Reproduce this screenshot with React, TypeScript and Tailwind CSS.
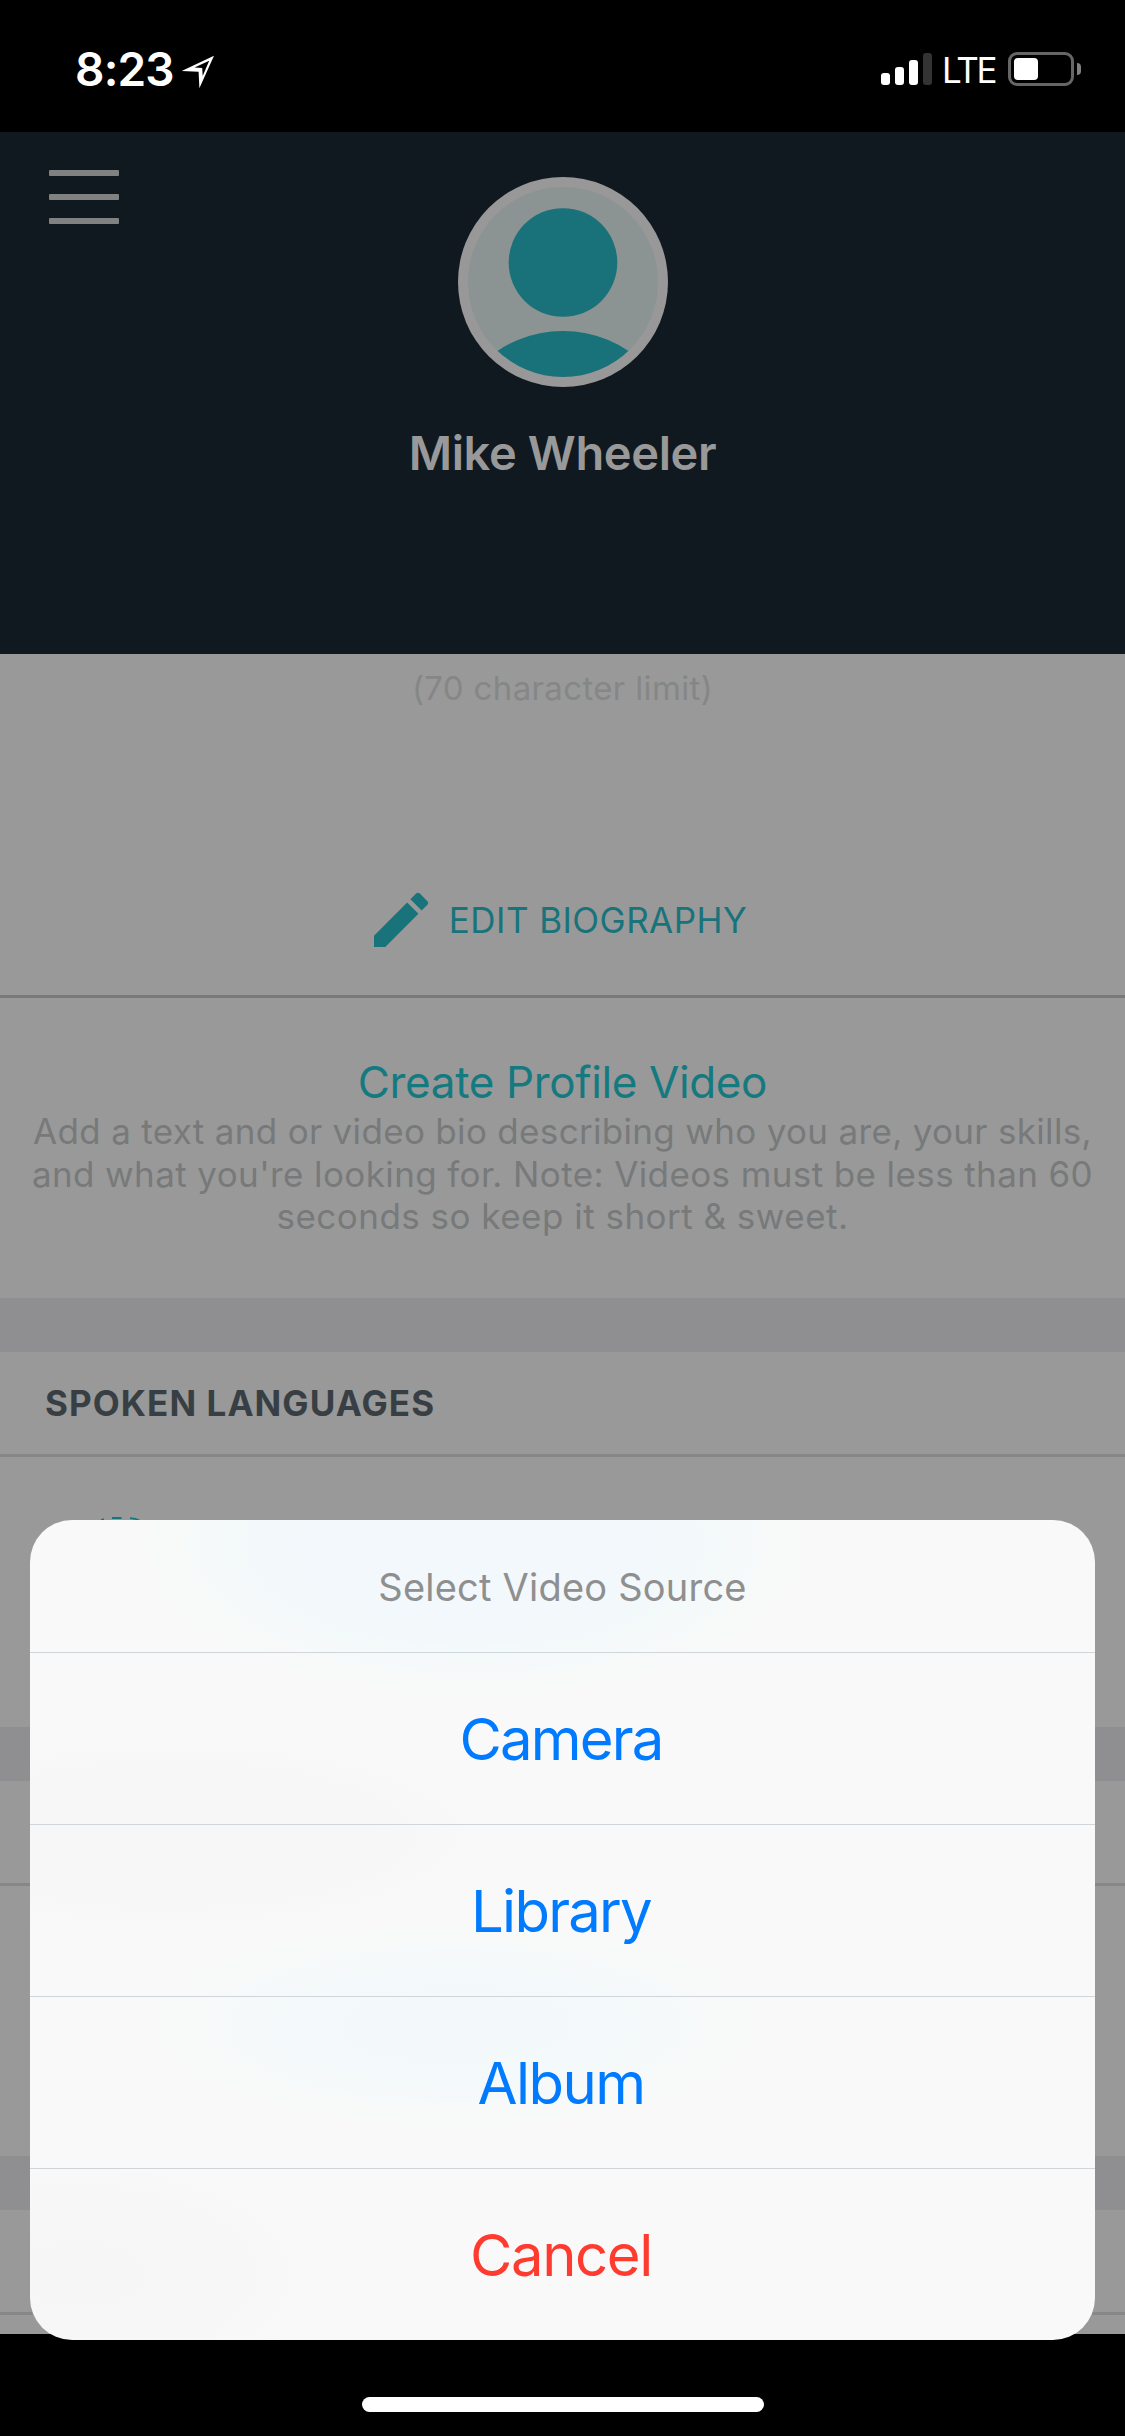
import type { ReactNode } from "react";

function LocationArrow() {
  return (
    <svg className="mt-[6px] ml-[7px] h-[34px] w-[34px]" viewBox="0 0 34 34" fill="none">
      <path
        d="M0.7 16 L33 0.8 L18.4 33.2 L17.6 16.8 Z M13.5 12.6 L21.2 12.9 L21.7 21 L28.2 5.8 Z"
        fill="#fff"
        fillRule="evenodd"
      />
    </svg>
  );
}

function SignalBars() {
  return (
    <div className="flex h-8 items-end gap-[5px]">
      <span className="h-3 w-[9px] rounded-[3px] bg-white" />
      <span className="h-[18px] w-[9px] rounded-[3px] bg-white" />
      <span className="h-[25px] w-[9px] rounded-[3px] bg-white" />
      <span className="h-8 w-[9px] rounded-[3px] bg-[#333333]" />
    </div>
  );
}

function Battery() {
  return (
    <div className="flex items-center gap-[3px]">
      <div className="h-[34px] w-[66px] rounded-[9px] border-[3px] border-[#666666] p-[3px]">
        <div className="h-full w-6 rounded-[4px] bg-white" />
      </div>
      <span className="h-3 w-1 rounded-r-full bg-[#808080]" />
    </div>
  );
}

function StatusBar() {
  return (
    <div className="flex h-[132px] items-center justify-between bg-black pt-[6px] pr-[44px] pl-[75px] text-white">
      <div className="flex items-center">
        <span className="text-[46px] leading-none font-semibold tracking-[-0.8px]">8:23</span>
        <LocationArrow />
      </div>
      <div className="flex items-center">
        <SignalBars />
        <span className="mt-[3px] mr-[12px] ml-[10px] w-[54px] text-[35px] leading-none tracking-[-2.2px]">LTE</span>
        <Battery />
      </div>
    </div>
  );
}

function Avatar() {
  return (
    <svg className="ml-px h-[210px] w-[210px]" viewBox="0 0 210 210">
      <defs>
        <clipPath id="avatar-clip">
          <circle cx="105" cy="105" r="95" />
        </clipPath>
      </defs>
      <circle cx="105" cy="105" r="105" fill="#989898" />
      <g clipPath="url(#avatar-clip)">
        <rect width="210" height="210" fill="#8b9393" />
        <circle cx="105" cy="85.5" r="54.3" fill="#19717a" />
        <circle cx="105" cy="272" r="118" fill="#19717a" />
      </g>
    </svg>
  );
}

function Header() {
  return (
    <header className="grid h-[522px] grid-cols-[1fr_auto_1fr] items-start bg-[#101820]">
      <div className="flex flex-col gap-[18px] pt-[38px] pl-[49px]">
        <span className="h-[6px] w-[70px] rounded-[1px] bg-[#808282]" />
        <span className="h-[6px] w-[70px] rounded-[1px] bg-[#808282]" />
        <span className="h-[6px] w-[70px] rounded-[1px] bg-[#808282]" />
      </div>
      <div className="flex flex-col items-center pt-[45px]">
        <Avatar />
        <h1 className="mt-[38px] text-[47px] leading-[56px] font-semibold tracking-[-0.37px] whitespace-nowrap text-[#999999]">
          Mike Wheeler
        </h1>
      </div>
    </header>
  );
}

function SectionHeader({ children }: { children?: ReactNode }) {
  return (
    <>
      <div className="h-[54px] shrink-0 bg-[#8f8f92]" />
      <div className="flex h-[105px] shrink-0 items-center border-b-[3px] border-[#878787] pl-[45px]">
        <h2 className="text-[35px] leading-none font-bold tracking-[1.08px] text-[#373f44]">{children}</h2>
      </div>
    </>
  );
}

function Biography() {
  return (
    <section className="flex h-[344px] shrink-0 flex-col items-center border-b-[3px] border-[#7a7a7a] pt-[14px]">
      <p className="text-[33px] leading-[40px] tracking-[0.35px] text-[#858787]">(70 character limit)</p>
      <div className="mt-[176px] flex items-center gap-3 pr-[13px] text-[#19737b]">
        <svg className="h-[72px] w-[72px]" viewBox="0 0 24 24" fill="currentColor">
          <path d="M3 17.25V21h3.75L17.81 9.94l-3.75-3.75L3 17.25zM20.71 7.04a1 1 0 0 0 0-1.41l-2.34-2.34a1 1 0 0 0-1.41 0l-1.83 1.83 3.75 3.75 1.83-1.83z" />
        </svg>
        <span className="text-[35px] leading-none tracking-[0.44px]">EDIT BIOGRAPHY</span>
      </div>
    </section>
  );
}

function ProfileVideo() {
  return (
    <section className="flex h-[300px] shrink-0 flex-col items-center pt-[57px] text-center">
      <h3 className="text-[44px] leading-[54px] tracking-[-0.37px] text-[#157a80]">Create Profile Video</h3>
      <p className="mt-px text-[35px] leading-[42.5px] whitespace-nowrap text-[#77797a]">
        <span className="block tracking-[0.32px]">
          Add a text and or video bio describing who you are, your skills,
        </span>
        <span className="block tracking-[0.39px]">
          and what you're looking for. Note: Videos must be less than 60
        </span>
        <span className="block tracking-[0.48px]">seconds so keep it short &amp; sweet.</span>
      </p>
    </section>
  );
}

const actions = [
  { label: "Camera", style: "text-[#007aff] tracking-[-1.8px]" },
  { label: "Library", style: "text-[#007aff] tracking-[-1.75px]" },
  { label: "Album", style: "text-[#007aff] tracking-[-1.5px]" },
  { label: "Cancel", style: "text-[#ff3b30] tracking-[-1.4px]" },
];

function ActionSheet() {
  return (
    <div className="absolute top-[1520px] left-[30px] w-[1065px] overflow-hidden rounded-[42px] bg-[#f9f9f9] bg-[radial-gradient(ellipse_330px_150px_at_445px_25px,#f2f8fb_0%,#f3f9fb_65%,transparent_100%),radial-gradient(ellipse_300px_100px_at_425px_505px,#f3f8fb_0%,#f4f9fb_55%,transparent_100%),radial-gradient(ellipse_330px_100px_at_140px_315px,#f7f7f7_0%,#f7f7f7_60%,transparent_100%),radial-gradient(ellipse_240px_120px_at_50px_755px,#f6f6f6_0%,#f7f7f7_60%,transparent_100%)]">
      <p className="flex h-[132px] items-center justify-center pt-[2px] text-[38px] leading-none tracking-[0.22px] text-[#8f8f8f]">
        Select Video Source
      </p>
      {actions.map(({ label, style }) => (
        <div key={label} className="h-[172px] border-t border-[#cfd5d8]">
          <button className={`h-full w-full pr-[3px] text-center text-[58px] leading-none ${style}`}>{label}</button>
        </div>
      ))}
    </div>
  );
}

export default function App() {
  return (
    <div className="relative flex h-[2436px] w-[1125px] flex-col overflow-hidden bg-black font-['Inter',sans-serif]">
      <StatusBar />
      <Header />
      <main className="flex h-[1680px] flex-col overflow-hidden bg-[#999999]">
        <Biography />
        <ProfileVideo />
        <SectionHeader>SPOKEN LANGUAGES</SectionHeader>
        <div className="h-[270px] shrink-0 pt-[60px] pl-[96px]">
          <svg className="h-[6px] w-[48px]" viewBox="0 0 48 6" fill="none" stroke="#17757c" strokeWidth="1.8">
            <path d="M16 1h9.5M34 1.2q6 .4 9 2M5 3l3-1" />
          </svg>
        </div>
        <SectionHeader />
        <div className="h-[270px] shrink-0" />
        <SectionHeader />
      </main>
      <div className="flex grow justify-center pt-[63px]">
        <span className="h-[15px] w-[402px] rounded-full bg-white" />
      </div>
      <ActionSheet />
    </div>
  );
}
